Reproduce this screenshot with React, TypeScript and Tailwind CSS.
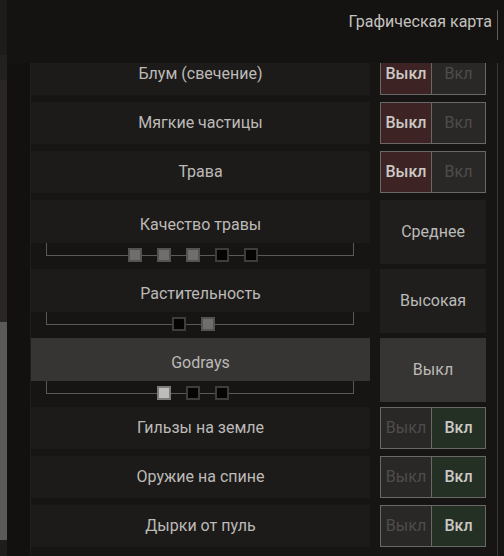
type Kind = 'fill' | 'empty' | 'sel'
type Toggle = { label: string; on: boolean }
type Slider = { label: string; value: string; marks: Kind[]; active?: boolean }

const Square = ({ kind }: { kind: Kind }) => {
  const cls =
    kind === 'fill'
      ? 'bg-[#6f6e6c] border-[#545351]'
      : kind === 'sel'
        ? 'bg-[#bdbcba] border-[#7d7c7a]'
        : 'bg-[#040404] border-[#3e3d3c]'
  return <div className={`h-[14px] w-[14px] border-2 ${cls}`} />
}

const ToggleRow = ({ label, on }: Toggle) => {
  return (
    <div className="mb-[7px] flex h-[42px] shrink-0 gap-[10px]">
      <div className="flex w-[339px] items-center justify-center bg-[#1c1b1a] text-[16px] text-[#bcbab7]">
        {label}
      </div>
      <div className="flex w-[106px] border border-[#6a6866] text-[16px]">
        <div
          className={`flex w-[51px] items-center justify-center border-r border-[#6a6866] ${
            on ? 'bg-[#292827] text-[#4f4d4b]' : 'bg-[#3d2323] font-medium text-[#cbc9c6]'
          }`}
        >
          Выкл
        </div>
        <div
          className={`flex flex-1 items-center justify-center ${
            on ? 'bg-[#243024] font-medium text-[#cbc9c6]' : 'bg-[#292827] text-[#4f4d4b]'
          }`}
        >
          Вкл
        </div>
      </div>
    </div>
  )
}

const SliderRow = ({ label, value, marks, active }: Slider) => {
  return (
    <div className="mb-[5px] flex h-[64px] shrink-0 gap-[10px]">
      <div className="flex w-[339px] flex-col">
        <div
          className={`flex h-[43px] items-center justify-center pt-[6px] text-[16px] text-[#bcbab7] ${
            active ? 'bg-[#363533]' : 'bg-[#1c1b1a]'
          }`}
        >
          {label}
        </div>
        <div className="relative ml-[15px] mr-[16px] h-[13px] border-x border-b border-[#5b5957]">
          <div className="absolute inset-x-0 top-[5px] flex justify-center gap-[15px] pr-[14px]">
            {marks.map((k, i) => (
              <Square key={i} kind={k} />
            ))}
          </div>
        </div>
      </div>
      <div
        className={`flex w-[106px] items-center justify-center text-[16px] text-[#bcbab7] ${
          active ? 'bg-[#363533]' : 'bg-[#1f1e1d]'
        }`}
      >
        {value}
      </div>
    </div>
  )
}

export default function App() {
  return (
    <div className="flex h-[556px] w-[504px] overflow-hidden bg-[#161514] font-['Roboto','Liberation_Sans',sans-serif]">
      <div className="flex w-[7px] shrink-0 flex-col">
        <div className="h-[55px] bg-[#1c1c1b]" />
        <div className="h-[25px] bg-[#222120]" />
        <div className="h-[242px] bg-[#2a2623]" />
        <div className="h-[218px] bg-[#5b5a57]" />
        <div className="flex-1 bg-[#1e1d1c]" />
      </div>
      <div className="flex flex-1 flex-col">
        <div className="flex h-[63px] shrink-0 items-start justify-end bg-[#141312] pr-[6px] pt-[10px]">
          <span className="text-[16px] leading-[24px] text-[#c4c2bf]">Графическая карта</span>
          <div className="ml-[5px] h-[30px] w-px bg-[#5d5b59]" />
        </div>
        <div className="flex min-h-0 flex-1">
          <div className="w-[23px] shrink-0 bg-[#121110]" />
          <div className="w-px shrink-0 bg-[#1f1e1d]" />
          <div className="w-[455px] shrink-0 overflow-hidden">
            <div className="-mt-[10px] flex flex-col">
              <ToggleRow label="Блум (свечение)" on={false} />
              <ToggleRow label="Мягкие частицы" on={false} />
              <ToggleRow label="Трава" on={false} />
              <SliderRow
                label="Качество травы"
                value="Среднее"
                marks={['fill', 'fill', 'fill', 'empty', 'empty']}
              />
              <SliderRow label="Растительность" value="Высокая" marks={['empty', 'fill']} />
              <SliderRow label="Godrays" value="Выкл" marks={['sel', 'empty', 'empty']} active />
              <ToggleRow label="Гильзы на земле" on />
              <ToggleRow label="Оружие на спине" on />
              <ToggleRow label="Дырки от пуль" on />
            </div>
          </div>
          <div className="flex w-[18px] shrink-0">
            <div className="ml-[11px] w-px bg-[#3a3938]" />
          </div>
        </div>
      </div>
    </div>
  )
}
